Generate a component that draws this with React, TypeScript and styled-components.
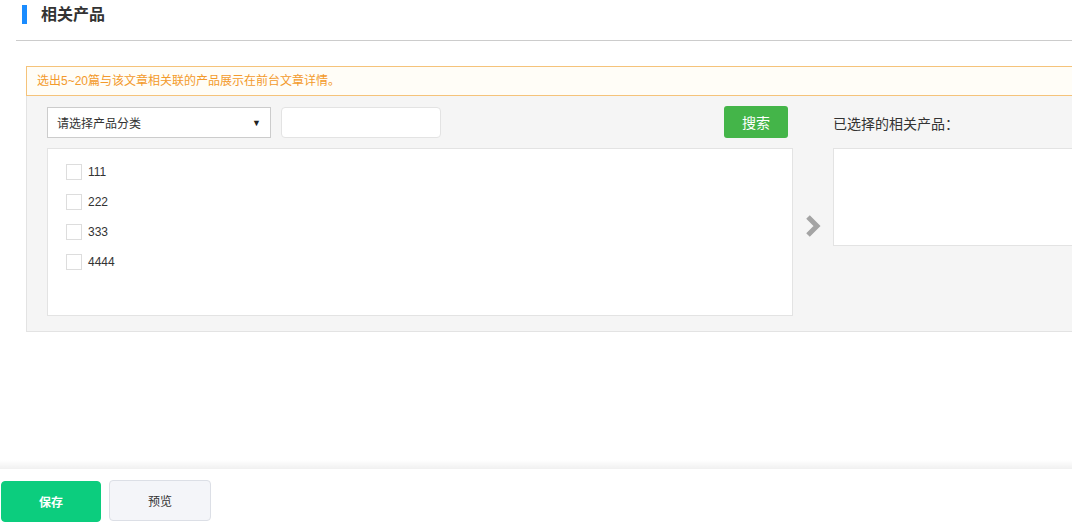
import React from "react";
import styled, { createGlobalStyle } from "styled-components";

const GlobalStyle = createGlobalStyle`
  html, body {
    margin: 0;
    padding: 0;
    background: #fff;
  }
  body {
    font-family: "Liberation Sans", "Noto Sans CJK SC", sans-serif;
    color: #333;
  }
  * {
    box-sizing: border-box;
  }
`;

const Page = styled.div`
  width: 1072px;
  height: 524px;
  overflow: hidden;
  display: flex;
  flex-direction: column;
`;

const Section = styled.div`
  flex: 1;
  margin-left: 16px;
`;

const Header = styled.div`
  height: 41px;
  border-bottom: 1px solid #ccc;
  display: flex;
  align-items: flex-start;
  padding: 5px 0 0 6px;
`;

const TitleBar = styled.span`
  width: 5px;
  height: 19px;
  background: #1a8cff;
  margin-right: 14px;
`;

const Title = styled.h2`
  margin: 0;
  font-size: 16px;
  font-weight: bold;
  line-height: 19px;
  color: #333;
`;

const Body = styled.div`
  margin: 25px 0 0 10px;
  width: 1100px;
`;

const Notice = styled.div`
  height: 30px;
  border: 1px solid #f5c37a;
  background: #fffdf7;
  color: #f39a2b;
  font-size: 12px;
  line-height: 28px;
  padding-left: 10px;
`;

const Panel = styled.div`
  background: #f5f5f5;
  border: 1px solid #e3e3e3;
  border-top: none;
  padding: 11px 20px 15px 20px;
  display: flex;
`;

const LeftCol = styled.div`
  width: 746px;
  display: flex;
  flex-direction: column;
  gap: 10px;
`;

const Toolbar = styled.div`
  display: flex;
  align-items: flex-start;
  height: 31px;
`;

const Select = styled.div`
  width: 224px;
  height: 31px;
  border: 1px solid #ccc;
  background: #fff;
  font-size: 12px;
  padding: 0 9px;
  display: flex;
  align-items: center;
  justify-content: space-between;
  color: #333;
`;

const Caret = styled.span`
  font-size: 9px;
  color: #222;
`;

const TextInput = styled.input`
  width: 160px;
  height: 31px;
  margin-left: 10px;
  border: 1px solid #e3e3e3;
  border-radius: 4px;
  background: #fff;
  outline: none;
`;

const SearchButton = styled.button`
  margin-left: auto;
  margin-right: 5px;
  width: 64px;
  height: 32px;
  margin-top: -1px;
  border: none;
  border-radius: 3px;
  background: #44b549;
  color: #fff;
  font-family: "Noto Sans CJK SC", sans-serif;
  font-size: 14px;
  cursor: pointer;
`;

const ListBox = styled.div<{ $height: number }>`
  height: ${(p) => p.$height}px;
  background: #fff;
  border: 1px solid #e3e3e3;
  padding: 15px 0 0 18px;
  display: flex;
  flex-direction: column;
  gap: 14px;
`;

const Row = styled.label`
  display: flex;
  align-items: center;
  height: 16px;
  font-size: 12px;
  color: #333;
`;

const Check = styled.span`
  width: 16px;
  height: 16px;
  border: 1px solid #ddd;
  background: #fff;
  margin-right: 6px;
`;

const ArrowCol = styled.div`
  width: 40px;
  display: flex;
  align-items: flex-end;
  justify-content: center;
  padding-bottom: 78px;
`;

const RightCol = styled.div`
  flex: 1;
  display: flex;
  flex-direction: column;
  gap: 10px;
`;

const RightLabel = styled.div`
  height: 31px;
  display: flex;
  align-items: center;
  font-size: 14px;
  color: #333;
`;

const SelectedBox = styled.div`
  height: 98px;
  background: #fff;
  border: 1px solid #e3e3e3;
`;

const Footer = styled.div`
  height: 55px;
  position: relative;
  background: #fff;
  padding: 11px 0 0 1px;
  display: flex;
  gap: 8px;
  &::before {
    content: "";
    position: absolute;
    left: 0;
    right: 0;
    top: -9px;
    height: 9px;
    background: linear-gradient(to bottom, rgba(0, 0, 0, 0), rgba(0, 0, 0, 0.06));
  }
`;

const FooterButton = styled.button<{ $primary?: boolean }>`
  width: ${(p) => (p.$primary ? 100 : 102)}px;
  height: 41px;
  margin-top: ${(p) => (p.$primary ? 1 : 0)}px;
  border-radius: 4px;
  border: 1px solid ${(p) => (p.$primary ? "#0ccd7e" : "#dcdfe6")};
  background: ${(p) => (p.$primary ? "#0ccd7e" : "#f4f5f9")};
  color: ${(p) => (p.$primary ? "#fff" : "#333")};
  font-family: "Noto Sans CJK SC", sans-serif;
  font-size: 12px;
  font-weight: ${(p) => (p.$primary ? "bold" : "normal")};
  cursor: pointer;
`;

const products = ["111", "222", "333", "4444"];

export default function App() {
  return (
    <>
      <GlobalStyle />
      <Page>
        <Section>
          <Header>
            <TitleBar />
            <Title>相关产品</Title>
          </Header>
          <Body>
            <Notice>选出5~20篇与该文章相关联的产品展示在前台文章详情。</Notice>
            <Panel>
              <LeftCol>
                <Toolbar>
                  <Select>
                    <span>请选择产品分类</span>
                    <Caret>▼</Caret>
                  </Select>
                  <TextInput />
                  <SearchButton>搜索</SearchButton>
                </Toolbar>
                <ListBox $height={168}>
                  {products.map((p) => (
                    <Row key={p}>
                      <Check />
                      {p}
                    </Row>
                  ))}
                </ListBox>
              </LeftCol>
              <ArrowCol>
                <svg width="18" height="24" viewBox="0 0 18 24">
                  <path
                    d="M4 3 L13 12 L4 21"
                    fill="none"
                    stroke="#a4a4a4"
                    strokeWidth="5"
                  />
                </svg>
              </ArrowCol>
              <RightCol>
                <RightLabel>已选择的相关产品：</RightLabel>
                <SelectedBox />
              </RightCol>
            </Panel>
          </Body>
        </Section>
        <Footer>
          <FooterButton $primary>保存</FooterButton>
          <FooterButton>预览</FooterButton>
        </Footer>
      </Page>
    </>
  );
}
